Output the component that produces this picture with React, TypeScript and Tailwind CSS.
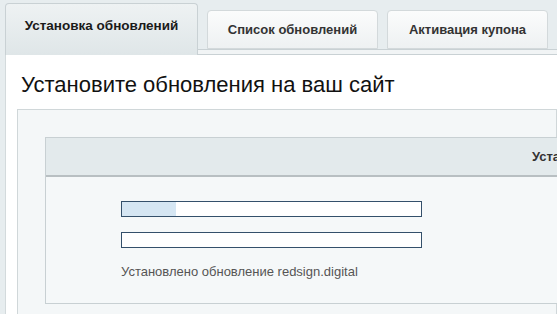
import React from "react";

export default function App() {
  const font = { fontFamily: '"Liberation Sans", Arial, sans-serif' };
  return (
    <div
      className="w-[557px] h-[314px] overflow-hidden bg-[#e7edef] relative"
      style={font}
    >
      {/* Tabs row */}
      <div className="flex items-start h-[55px] pl-[5px] relative">
        <div className="w-[193px] h-[52px] mt-[3px] rounded-t-[4px] border border-b-0 border-[#c9d1d4] bg-gradient-to-b from-[#eef2f3] to-[#dfe6e8] flex items-center justify-center pb-[6px] z-10">
          <span className="text-[13.5px] font-bold text-[#1a1a1a]">Установка обновлений</span>
        </div>
        <div className="ml-[9px] w-[171px] h-[39px] mt-[10px] rounded-t-[4px] border border-[#d3d9db] bg-gradient-to-b from-[#fbfcfc] to-[#eef1f2] flex items-center justify-center">
          <span className="text-[13px] font-bold text-[#333]">Список обновлений</span>
        </div>
        <div className="ml-[9px] w-[161px] h-[39px] mt-[10px] rounded-t-[4px] border border-[#d3d9db] bg-gradient-to-b from-[#fbfcfc] to-[#eef1f2] flex items-center justify-center">
          <span className="text-[13px] font-bold text-[#333]">Активация купона</span>
        </div>
        <div className="absolute left-[5px] right-0 top-[49px] h-[6px] bg-[#f1f4f5] border-t border-b border-[#c9d1d4]" />
      </div>

      {/* Content panel */}
      <div className="ml-[5px] bg-white border-l border-[#d3dadc] h-[259px] pt-[17px]">
        <div className="text-[22px] leading-[25px] text-[#111] pl-[15px]">Установите обновления на ваш сайт</div>
        <div className="ml-[11px] mt-[12px] bg-[#f4f7f8] border border-[#d0d7d9] h-[300px] pt-[27px] pl-[27px]">
          <div className="w-[600px] bg-[#f5f8f9] border border-[#c8d0d3] h-[167px]">
            <div className="h-[39px] bg-[#e3eaec] border-b-2 border-[#b8bfc2] flex items-center pl-[486px]">
              <span className="text-[13px] font-bold text-[#333] whitespace-nowrap">Установка</span>
            </div>
            <div className="pl-[75px] pt-[24px]">
              <div className="w-[301px] h-[16px] border border-[#34506b] bg-white">
                <div className="w-[54px] h-full bg-[#d5e6f3]" />
              </div>
              <div className="w-[301px] h-[16px] border border-[#34506b] bg-white mt-[15px]" />
              <div className="mt-[14px] text-[13px] text-[#555]">Установлено обновление redsign.digital</div>
            </div>
          </div>
        </div>
      </div>
    </div>
  );
}
